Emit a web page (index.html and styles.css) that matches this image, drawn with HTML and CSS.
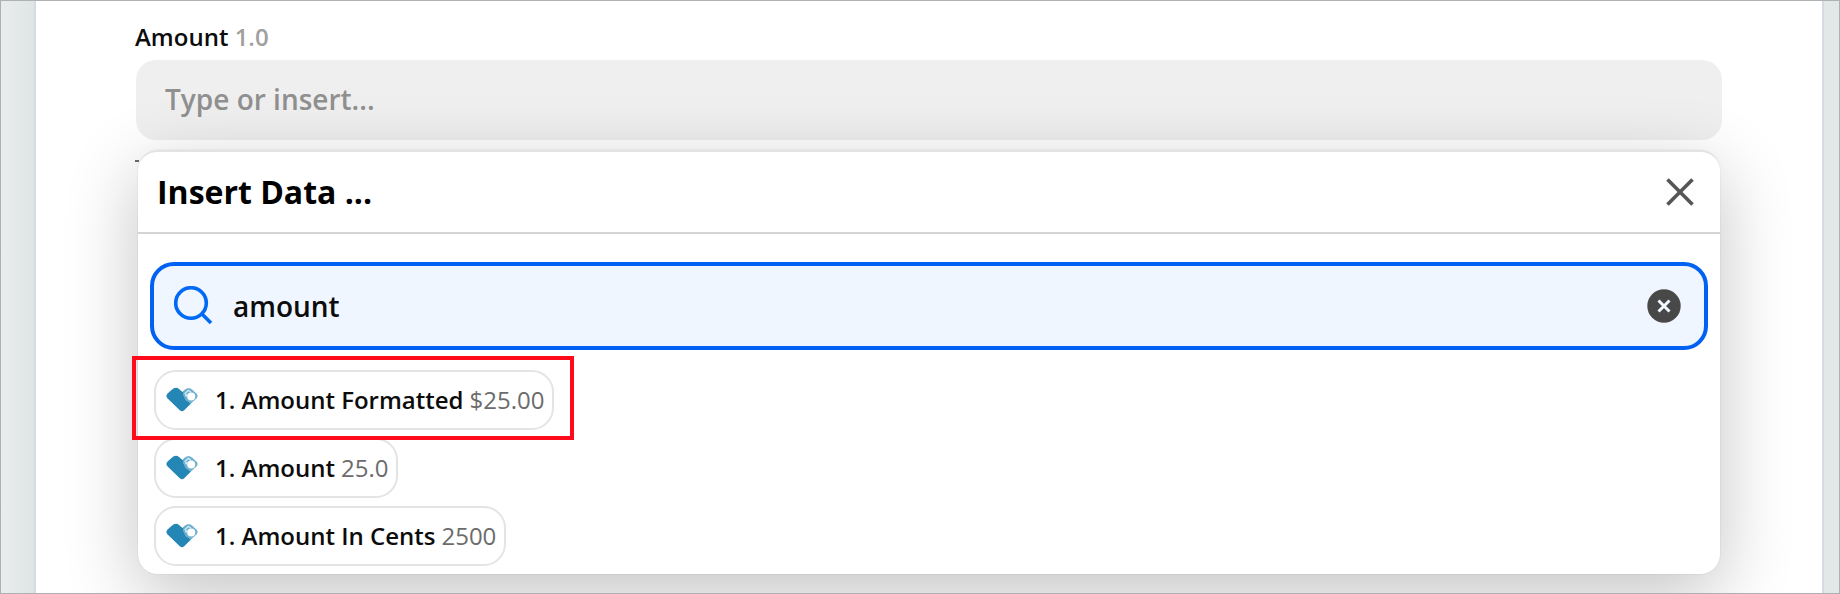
FILE: index.html
```html
<!DOCTYPE html>
<html lang="en">
<head>
    <meta charset="UTF-8">
    <meta name="viewport" content="width=device-width, initial-scale=1.0">
    <title>Insert Data</title>
    <link rel="stylesheet" href="styles.css">
</head>
<body>
    <svg class="sprite" width="0" height="0">
        <symbol id="heart" viewBox="0 0 32 26">
            <path fill="#2386b5" d="M5.5 3 Q9.5 -.8 13 2 L16.5 5 L19 3 L17.6 8 L20 13 L25 16.6 L18.2 23.2 Q16 25.2 13.8 23.2 L1.6 11.6 Q-.8 9 1.6 6.6 Z"/>
            <path fill="#6eb0cf" d="M19 2.4 Q22.5 -.6 26 2.4 L30.4 6.6 Q32.8 9 30.4 11.4 L25 16.6 L20 13.6 L17 8 L17.4 4 Z"/>
            <path fill="none" stroke="#d6eaf3" stroke-width="1.3" d="M18.6 7 L22.3 3.4 L25 5.2"/>
            <circle cx="25.2" cy="9.6" r="4" fill="#fff"/>
            <circle cx="20.6" cy="8.2" r="1.3" fill="#d6eaf3"/>
        </symbol>
    </svg>

    <main class="panel">
        <div class="field">
            <label class="field-label">Amount <span>1.0</span></label>
            <div class="field-input">Type or insert...</div>
        </div>

        <section class="popup">
            <header class="popup-header">
                <h2>Insert Data ...</h2>
                <svg class="close" width="28" height="28" viewBox="0 0 28 28">
                    <path d="M1.5 1.5 L26.5 26.5 M26.5 1.5 L1.5 26.5"/>
                </svg>
            </header>

            <div class="search">
                <svg class="search-icon" width="40" height="40" viewBox="0 0 40 40">
                    <circle cx="17" cy="17" r="15.3"/>
                    <path d="M28 28 L37 37"/>
                </svg>
                <span class="search-text">amount</span>
                <svg class="clear" width="34" height="34" viewBox="0 0 34 34">
                    <circle cx="17" cy="17" r="16.7"/>
                    <path d="M11.5 11.5 L22.5 22.5 M22.5 11.5 L11.5 22.5"/>
                </svg>
            </div>

            <ul class="results">
                <li class="chip highlighted"><svg class="heart"><use href="#heart"/></svg><b>1. Amount Formatted</b><span>$25.00</span></li>
                <li class="chip"><svg class="heart"><use href="#heart"/></svg><b>1. Amount</b><span>25.0</span></li>
                <li class="chip"><svg class="heart"><use href="#heart"/></svg><b>1. Amount In Cents</b><span>2500</span></li>
            </ul>
        </section>
    </main>
</body>
</html>
```

FILE: styles.css
```css
* {
    box-sizing: border-box;
}
body {
    margin: 0;
    height: 594px;
    padding: 0 15px 0 33px;
    overflow: hidden;
    border: 1px solid #aeb0b1;
    background: linear-gradient(to right, #eaedee 0, #dfe4e5 34px, #e2e7e8 100%);
    font-family: "Open Sans", "Noto Sans", sans-serif;
    color: #0c0c0c;
}
.sprite {
    position: absolute;
}
.panel {
    height: 592px;
    padding: 18px 100px 0 100px;
    background: #fff;
    border: solid #d6dbe1;
    border-width: 0 2px;
}
.field-label {
    display: block;
    height: 41px;
    margin-left: -1px;
    font-size: 24px;
    line-height: 36px;
    font-weight: 600;
}
.field-label span {
    color: #a0a0a0;
}
.field-input {
    height: 80px;
    padding: 0 29px;
    border-radius: 20px;
    background: #efefef;
    color: #909090;
    font-size: 28px;
    line-height: 78px;
    font-weight: 600;
}
.popup {
    position: relative;
    height: 424px;
    margin: 10px 2px 0;
    border-top: 2px solid #e3e3e3;
    border-radius: 20px;
    background: #fff;
    box-shadow: 0 0 0 1px rgba(0, 0, 0, 0.03), 0 20px 72px rgba(0, 0, 0, 0.24);
}
/* tip of the help text that the popup covers */
.popup::before {
    content: "";
    position: absolute;
    left: -3px;
    top: 8px;
    width: 4px;
    height: 2px;
    background: #666;
}
.popup-header {
    display: flex;
    align-items: center;
    justify-content: space-between;
    height: 82px;
    padding: 0 26px 0 19px;
    border-bottom: 2px solid #d4d4d4;
}
.popup-header h2 {
    margin: 0;
    font-size: 32px;
    line-height: 44px;
    font-weight: 700;
    color: #000;
}
.close {
    fill: none;
    stroke: #555;
    stroke-width: 3.6;
}
.search {
    display: flex;
    align-items: center;
    height: 88px;
    margin: 28px 12px 0;
    padding: 0 23px 0 20px;
    border: 4px solid #0061f2;
    border-radius: 24px;
    background: #eff6ff;
}
.search-icon {
    fill: none;
    stroke: #0069f5;
    stroke-width: 3.6;
}
.search-text {
    flex: 1;
    margin-left: 19px;
    font-size: 28px;
    font-weight: 600;
}
.clear {
    fill: #484848;
    stroke: none;
}
.clear path {
    stroke: #f4f8ff;
    stroke-width: 3;
}
.results {
    display: flex;
    flex-direction: column;
    align-items: flex-start;
    gap: 8px;
    margin: 20px 0 0;
    padding: 0 16px;
    list-style: none;
}
.chip {
    position: relative;
    display: flex;
    align-items: center;
    height: 60px;
    padding: 0 8px 0 10px;
    border: 2px solid #e4e4e4;
    border-radius: 22px;
    font-size: 24px;
    line-height: 32px;
    white-space: nowrap;
}
.chip b {
    margin: 0 6px 0 17px;
    font-weight: 600;
}
.chip span {
    color: #6c6c6c;
}
.heart {
    width: 32px;
    height: 26px;
}
.highlighted::after {
    content: "";
    position: absolute;
    z-index: 1;
    inset: -16px -22px -12px -24px;
    border: 4px solid #ff0a1b;
}
```
